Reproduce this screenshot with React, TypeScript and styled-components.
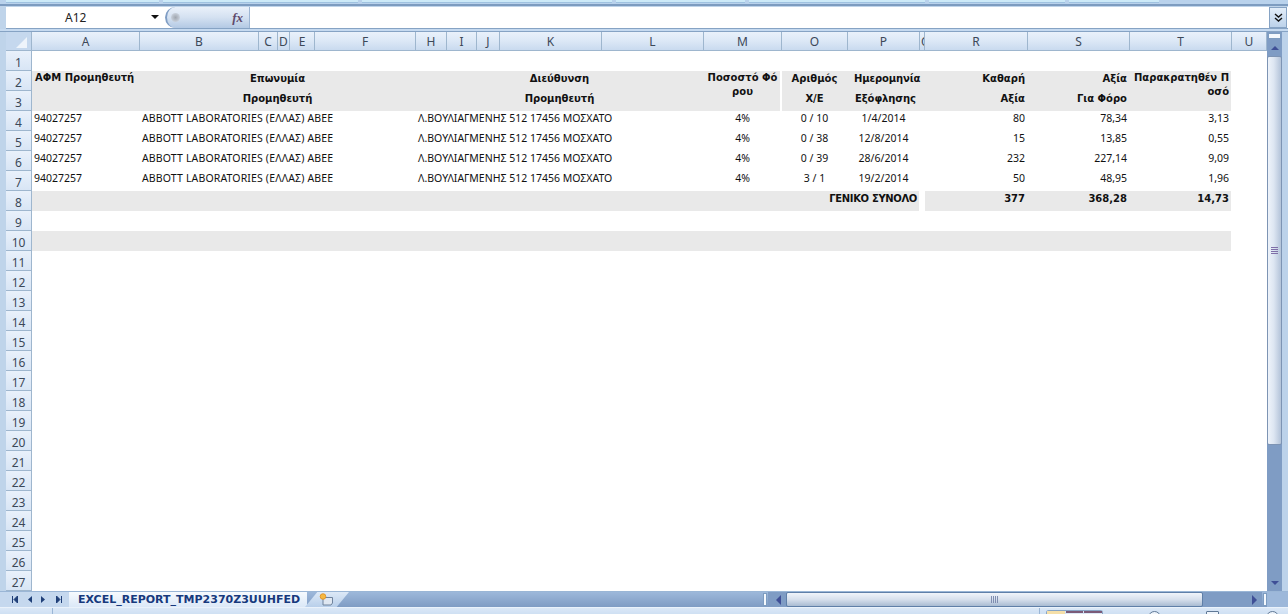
import { Fragment } from "react";
import styled, { createGlobalStyle } from "styled-components";

const GlobalStyle = createGlobalStyle`
  html, body {
    margin: 0;
    padding: 0;
    height: 100%;
    overflow: hidden;
    background: #bfd4ea;
  }
  #root {
    height: 100%;
  }
`;

const COLUMNS = [
  { name: "A", width: 108 },
  { name: "B", width: 119 },
  { name: "C", width: 19 },
  { name: "D", width: 12 },
  { name: "E", width: 25 },
  { name: "F", width: 101 },
  { name: "H", width: 31 },
  { name: "I", width: 30 },
  { name: "J", width: 23 },
  { name: "K", width: 102 },
  { name: "L", width: 102 },
  { name: "M", width: 78 },
  { name: "O", width: 66 },
  { name: "P", width: 72 },
  { name: "Q", width: 5 },
  { name: "R", width: 103 },
  { name: "S", width: 102 },
  { name: "T", width: 102 },
  { name: "U", width: 35 },
];

const ROW_COUNT = 27;

const rows = [
  { afm: "94027257", a: "0 / 10", d: "1/4/2014", r: "80", s: "78,34", t: "3,13" },
  { afm: "94027257", a: "0 / 38", d: "12/8/2014", r: "15", s: "13,85", t: "0,55" },
  { afm: "94027257", a: "0 / 39", d: "28/6/2014", r: "232", s: "227,14", t: "9,09" },
  { afm: "94027257", a: "3 / 1", d: "19/2/2014", r: "50", s: "48,95", t: "1,96" },
];

const Page = styled.div`
  width: 1288px;
  height: 614px;
  display: flex;
  flex-direction: column;
  overflow: hidden;
  background: #bfd4ea;
  font-family: "Noto Sans", "Liberation Sans", sans-serif;
`;

const RibbonEdge = styled.div`
  height: 6px;
  flex: none;
  box-sizing: border-box;
  border-bottom: 2px solid #7d9cc0;
  background: #b9d2ec;
  display: flex;
  gap: 4px;
  padding: 0 6px;
`;

const RibbonGroup = styled.div<{ $w: number }>`
  width: ${(p) => p.$w}px;
  height: 3px;
  background: #cdeaf8;
  border-bottom: 1px solid #9fc2e0;
  box-sizing: border-box;
`;

const FormulaBar = styled.div`
  height: 22px;
  flex: none;
  display: flex;
  box-sizing: border-box;
  margin-top: 1px;
  margin-left: 6px;
  background: #fff;
  border-bottom: 1px solid #86a3c4;
`;

const NameBox = styled.div`
  width: 154px;
  flex: none;
  display: flex;
  align-items: center;
  font-size: 12px;
  color: #222;
  position: relative;
`;

const NameText = styled.span`
  margin-left: 59px;
`;

const NameCaret = styled.span`
  position: absolute;
  right: 1px;
  top: 8px;
  width: 0;
  height: 0;
  border-left: 4px solid transparent;
  border-right: 4px solid transparent;
  border-top: 4px solid #111;
`;

const FxPill = styled.div`
  width: 85px;
  margin-left: 5px;
  flex: none;
  display: flex;
  align-items: center;
  justify-content: space-between;
  padding: 0 6px 0 4px;
  box-sizing: border-box;
  border-radius: 11px 0 0 11px;
  background: linear-gradient(#eaf1fa, #d4e1f1 50%, #b3c9e4);
  border-left: 2px solid #7f9dc4;
  border-right: 1px solid #9db6d4;
`;

const PillDot = styled.span`
  width: 9px;
  height: 9px;
  border-radius: 50%;
  background: radial-gradient(#a0a6af, #d9e2ee);
`;

const FxLabel = styled.span`
  font-family: "Liberation Serif", serif;
  font-style: italic;
  font-weight: 700;
  font-size: 13px;
  color: #5f4a6c;
`;

const FormulaInput = styled.div`
  flex: 1;
`;

const ExpandButton = styled.div`
  width: 18px;
  flex: none;
  margin-right: 1px;
  box-sizing: border-box;
  border: 1px solid #86a3c4;
  background: linear-gradient(#e2edf9, #bcd2ea);
  display: flex;
  align-items: center;
  justify-content: center;
`;

const Gap = styled.div`
  height: 2px;
  flex: none;
  background: #c6daf0;
`;

const SheetArea = styled.div`
  height: 561px;
  flex: none;
  display: flex;
  padding-left: 6px;
  border-bottom: 1px solid #9ab6d6;
  border-top: 1px solid #86a3c4;
  box-sizing: border-box;
`;

const Sheet = styled.div`
  display: grid;
  grid-template-columns: 26px ${COLUMNS.map((c) => c.width + "px").join(" ")};
  grid-template-rows: 19px repeat(${ROW_COUNT}, 20px);
  width: 1261px;
  flex: none;
  background: #fff;
  overflow: hidden;
`;

const Corner = styled.div`
  grid-row: 1;
  grid-column: 1;
  position: relative;
  background: #c5d8ee;
  border-right: 1px solid #9eb6ce;
  border-bottom: 1px solid #9eb6ce;
  box-sizing: border-box;
`;

const CornerMark = styled.span`
  position: absolute;
  right: 4px;
  bottom: 2px;
  width: 0;
  height: 0;
  border-left: 11px solid transparent;
  border-bottom: 11px solid #eef4fb;
`;

const ColHead = styled.div<{ $start?: boolean }>`
  grid-row: 1;
  box-sizing: border-box;
  border-right: 1px solid #9eb6ce;
  border-bottom: 1px solid #9eb6ce;
  background: linear-gradient(#e9f1fb, #dce8f6 50%, #c9daef);
  font-size: 12px;
  color: #3c4858;
  display: flex;
  align-items: center;
  justify-content: ${(p) => (p.$start ? "flex-start" : "center")};
  padding: 1px 0 0 ${(p) => (p.$start ? "1px" : "0")};
  overflow: hidden;
`;

const RowHead = styled.div<{ $row: number }>`
  grid-column: 1;
  grid-row: ${(p) => p.$row + 1};
  box-sizing: border-box;
  border-right: 1px solid #9eb6ce;
  border-bottom: 1px solid #9eb6ce;
  background: linear-gradient(#e9f1fb, #d8e5f5);
  font-size: 12px;
  color: #3c4858;
  display: flex;
  align-items: center;
  justify-content: center;
  padding-top: 3px;
`;

/* first and last are grid column lines for the sheet columns, 2 = A */
const Cell = styled.div<{
  $row: number;
  $first: number;
  $last?: number;
  $rows?: number;
  $align?: string;
  $bold?: boolean;
  $grey?: boolean;
  $nudge?: number;
}>`
  grid-row: ${(p) => p.$row + 1} / span ${(p) => p.$rows ?? 1};
  grid-column: ${(p) => p.$first} / ${(p) => (p.$last ?? p.$first) + 1};
  box-sizing: border-box;
  margin-right: 1px;
  padding: 0 2px 0 ${(p) => 2 + (p.$nudge ?? 0)}px;
  font-size: ${(p) => (p.$bold ? "10px" : "10.5px")};
  font-family: ${(p) => (p.$bold ? '"DejaVu Sans", sans-serif' : "inherit")};
  line-height: ${(p) => (p.$bold ? "14px" : "15px")};
  color: #111;
  text-align: ${(p) => p.$align ?? "left"};
  font-weight: ${(p) => (p.$bold ? 700 : 400)};
  background: ${(p) => (p.$grey ? "#e9e9e9" : "transparent")};
  white-space: pre-wrap;
  overflow: hidden;
`;

const SupplierCell = styled(Cell)`
  letter-spacing: 0.15px;
`;

const DateHeadCell = styled(Cell)`
  overflow: visible;
  letter-spacing: -0.1px;
`;

const TotalCell = styled(Cell)`
  padding-top: 1px;
`;

const TotalLabel = styled(TotalCell)`
  letter-spacing: -0.35px;
`;

const HeadLine = styled.div`
  height: 20px;
  line-height: 15px;
`;

const WhiteRule = styled.div`
  grid-row: 3 / span 2;
  grid-column: 14;
  width: 2px;
  background: #fff;
  margin-left: -2px;
`;

const VScroll = styled.div`
  width: 15px;
  flex: none;
  display: flex;
  flex-direction: column;
  background: #7f9cc4;
  box-sizing: border-box;
`;

const RightFrame = styled.div`
  flex: 1;
  background: #bcd2ea;
`;

const SplitHandle = styled.div`
  height: 4px;
  margin: 1px 1px 0;
  background: #f4f8fd;
  border: 1px solid #7d9cc0;
  flex: none;
`;

const ScrollButton = styled.div`
  height: 17px;
  flex: none;
  display: flex;
  align-items: center;
  justify-content: center;
`;

const Triangle = styled.span<{ $dir: "up" | "down" }>`
  width: 0;
  height: 0;
  border-left: 4px solid transparent;
  border-right: 4px solid transparent;
  ${(p) =>
    p.$dir === "up"
      ? "border-bottom: 4px solid #3f4f96;"
      : "border-top: 4px solid #3f4f96;"}
`;

const VThumb = styled.div`
  height: 389px;
  flex: none;
  box-sizing: border-box;
  border: 1px solid #7d94b4;
  border-radius: 2px;
  background: linear-gradient(90deg, #eef3fa, #dde6f2 45%, #b3c3d9);
  display: flex;
  align-items: center;
  justify-content: center;
`;

const Grip = styled.div<{ $vertical?: boolean }>`
  width: 7px;
  height: 7px;
  background: ${(p) =>
    p.$vertical
      ? "repeating-linear-gradient(90deg, #7f8db0 0 1px, transparent 1px 2px)"
      : "repeating-linear-gradient(0deg, #7f6fa8 0 1px, transparent 1px 2px)"};
`;

const VTrack = styled.div`
  flex: 1;
`;

const TabBar = styled.div`
  height: 15px;
  flex: none;
  display: flex;
  align-items: stretch;
  background: linear-gradient(#9db8da, #7f9cc4);
  box-sizing: border-box;
`;

const TabNav = styled.div`
  width: 69px;
  padding-left: 12px;
  flex: none;
  background: #c5d8ee;
  display: flex;
  align-items: center;
  box-sizing: border-box;
`;

const ActiveTab = styled.div`
  width: 238px;
  flex: none;
  background: linear-gradient(#f6fafe, #dbe8f7);
  color: #17397d;
  font-family: "DejaVu Sans", sans-serif;
  font-size: 11px;
  font-weight: 700;
  display: flex;
  align-items: center;
  padding-left: 9px;
  box-sizing: border-box;
  white-space: nowrap;
`;

const NewTab = styled.div`
  width: 44px;
  flex: none;
  display: flex;
  align-items: center;
  justify-content: center;
  background: linear-gradient(#dde9f7, #b8cfea);
  clip-path: polygon(28% 0, 100% 0, 72% 100%, 0 100%);
  margin-left: -2px;
`;

const TabFill = styled.div`
  flex: 1;
`;

const HSplit = styled.div`
  width: 2px;
  flex: none;
  background: #f4f8fd;
  border: 1px solid #7d9cc0;
  margin: 1px 0;
`;

const HScroll = styled.div`
  width: 494px;
  flex: none;
  display: flex;
  align-items: center;
  margin: 0 1px;
  background: #7f9cc4;
`;

const HArrow = styled.span<{ $dir: "left" | "right" }>`
  width: 0;
  height: 0;
  border-top: 5px solid transparent;
  border-bottom: 5px solid transparent;
  ${(p) =>
    p.$dir === "left"
      ? "border-right: 5px solid #3f4f96; margin: 0 5px 0 8px;"
      : "border-left: 5px solid #3f4f96; margin: 0 5px 0 auto;"}
`;

const HThumb = styled.div`
  width: 417px;
  height: 15px;
  box-sizing: border-box;
  border: 1px solid #5f7fa8;
  border-radius: 2px;
  background: linear-gradient(#f0f4fa, #d6dfec 50%, #a9bbd2);
  display: flex;
  align-items: center;
  justify-content: center;
`;

const TabBarEnd = styled.div`
  width: 21px;
  flex: none;
  background: #9db8da;
`;

const StatusBar = styled.div`
  flex: 1;
  display: flex;
  background: linear-gradient(#dbe8f7, #cfe0f3);
  border-top: 1px solid #eaf2fb;
  box-sizing: border-box;
  overflow: hidden;
`;

const StatusCell = styled.div<{ $w: number }>`
  width: ${(p) => p.$w}px;
  flex: none;
  border-right: 1px solid #9ab6d6;
  box-sizing: border-box;
`;

const ViewButtons = styled.div`
  width: 57px;
  margin: 2px 0 0 6px;
  flex: none;
  display: flex;
  gap: 1px;
  border: 1px solid #86a3c4;
  border-bottom: none;
  border-radius: 3px 3px 0 0;
  box-sizing: border-box;
`;

const ViewButton = styled.div<{ $active?: boolean }>`
  flex: 1;
  background: ${(p) => (p.$active ? "#f5dfa8" : "#dce8f6")};
  border-top: 2px solid ${(p) => (p.$active ? "#f5dfa8" : "#7a5a78")};
`;

const ZoomKnob = styled.div<{ $gap: number; $square?: boolean }>`
  width: 13px;
  height: 13px;
  margin: 3px 0 0 ${(p) => p.$gap}px;
  flex: none;
  box-sizing: border-box;
  border: 1px solid #5f7896;
  border-radius: ${(p) => (p.$square ? "1px" : "50%")};
  background: #eef4fb;
`;

const NavIcon = () => (
  <svg width="50" height="9" viewBox="0 0 50 9">
    <path d="M0.5 1v7M5.5 1 2 4.5 5.5 8z" fill="#1f3f78" stroke="#1f3f78" strokeWidth="1" />
    <path d="M20 1 16 4.5 20 8z" fill="#1f3f78" />
    <path d="M29 1l4 3.5L29 8z" fill="#1f3f78" />
    <path d="M44.5 1l3.5 3.5L44.5 8zM49.5 1v7" fill="#1f3f78" stroke="#1f3f78" strokeWidth="1" />
  </svg>
);

const NewSheetIcon = () => (
  <svg width="16" height="13" viewBox="0 0 16 13">
    <path d="M4 4.5h9.5V10l-1.5 2H4z" fill="#dfe7f1" stroke="#6f839d" />
    <circle cx="4" cy="3.5" r="2.8" fill="#f5b942" stroke="#e08a1c" strokeWidth="0.8" />
  </svg>
);

const ExpandIcon = () => (
  <svg width="9" height="10" viewBox="0 0 9 10">
    <path d="M1 1l3.5 3L8 1M1 5l3.5 3L8 5" fill="none" stroke="#111" strokeWidth="1.4" />
  </svg>
);

export default function App() {
  return (
    <Page>
      <GlobalStyle />
      <RibbonEdge>
        <RibbonGroup $w={153} />
        <RibbonGroup $w={195} />
        <RibbonGroup $w={250} />
        <RibbonGroup $w={129} />
        <RibbonGroup $w={176} />
        <RibbonGroup $w={136} />
        <RibbonGroup $w={90} />
      </RibbonEdge>
      <FormulaBar>
        <NameBox>
          <NameText>A12</NameText>
          <NameCaret />
        </NameBox>
        <FxPill>
          <PillDot />
          <FxLabel>fx</FxLabel>
        </FxPill>
        <FormulaInput />
        <ExpandButton>
          <ExpandIcon />
        </ExpandButton>
      </FormulaBar>
      <Gap />
      <SheetArea>
        <Sheet>
          <Corner>
            <CornerMark />
          </Corner>
          {COLUMNS.map((c) => (
            <ColHead key={c.name} $start={c.name === "Q"}>
              {c.name}
            </ColHead>
          ))}
          {Array.from({ length: ROW_COUNT }, (_, i) => (
            <RowHead key={i} $row={i + 1}>
              {i + 1}
            </RowHead>
          ))}

          <Cell $row={2} $rows={2} $first={2} $last={19} $grey />
          <Cell $row={2} $rows={2} $first={2} $bold $nudge={1}>
            ΑΦΜ Προμηθευτή
          </Cell>
          <Cell $row={2} $rows={2} $first={3} $last={7} $align="center" $bold>
            <HeadLine>Επωνυμία</HeadLine>
            <HeadLine>Προμηθευτή</HeadLine>
          </Cell>
          <Cell $row={2} $rows={2} $first={8} $last={12} $align="center" $bold>
            <HeadLine>Διεύθυνση</HeadLine>
            <HeadLine>Προμηθευτή</HeadLine>
          </Cell>
          <Cell $row={2} $rows={2} $first={13} $align="center" $bold>
            Ποσοστό Φό{"\n"}ρου
          </Cell>
          <WhiteRule />
          <Cell $row={2} $rows={2} $first={14} $align="center" $bold>
            <HeadLine>Αριθμός</HeadLine>
            <HeadLine>Χ/Ε</HeadLine>
          </Cell>
          <DateHeadCell $row={2} $rows={2} $first={15} $align="center" $bold $nudge={4}>
            <HeadLine>Ημερομηνία</HeadLine>
            <HeadLine>Εξόφλησης</HeadLine>
          </DateHeadCell>
          <Cell $row={2} $rows={2} $first={17} $align="right" $bold>
            <HeadLine>Καθαρή</HeadLine>
            <HeadLine>Αξία</HeadLine>
          </Cell>
          <Cell $row={2} $rows={2} $first={18} $align="right" $bold>
            <HeadLine>Αξία</HeadLine>
            <HeadLine>Για Φόρο</HeadLine>
          </Cell>
          <Cell $row={2} $rows={2} $first={19} $align="right" $bold>
            Παρακρατηθέν Π{"\n"}οσό
          </Cell>

          {rows.map((r, i) => (
            <Fragment key={i}>
              <Cell $row={4 + i} $first={2}>
                {r.afm}
              </Cell>
              <SupplierCell $row={4 + i} $first={3} $last={7}>
                ABBOTT LABORATORIES (ΕΛΛΑΣ) ΑΒΕΕ
              </SupplierCell>
              <Cell $row={4 + i} $first={8} $last={12}>
                Λ.ΒΟΥΛΙΑΓΜΕΝΗΣ 512 17456 ΜΟΣΧΑΤΟ
              </Cell>
              <Cell $row={4 + i} $first={13} $align="center">
                4%
              </Cell>
              <Cell $row={4 + i} $first={14} $align="center">
                {r.a}
              </Cell>
              <Cell $row={4 + i} $first={15} $align="center">
                {r.d}
              </Cell>
              <Cell $row={4 + i} $first={17} $align="right">
                {r.r}
              </Cell>
              <Cell $row={4 + i} $first={18} $align="right">
                {r.s}
              </Cell>
              <Cell $row={4 + i} $first={19} $align="right">
                {r.t}
              </Cell>
            </Fragment>
          ))}

          <TotalLabel $row={8} $first={2} $last={15} $align="right" $bold $grey>
            ΓΕΝΙΚΟ ΣΥΝΟΛΟ
          </TotalLabel>
          <Cell $row={8} $first={17} $last={19} $grey />
          <TotalCell $row={8} $first={17} $align="right" $bold>
            377
          </TotalCell>
          <TotalCell $row={8} $first={18} $align="right" $bold>
            368,28
          </TotalCell>
          <TotalCell $row={8} $first={19} $align="right" $bold>
            14,73
          </TotalCell>
          <Cell $row={10} $first={2} $last={19} $grey />
        </Sheet>
        <VScroll>
          <SplitHandle />
          <ScrollButton>
            <Triangle $dir="up" />
          </ScrollButton>
          <VThumb>
            <Grip />
          </VThumb>
          <VTrack />
          <ScrollButton>
            <Triangle $dir="down" />
          </ScrollButton>
        </VScroll>
        <RightFrame />
      </SheetArea>
      <TabBar>
        <TabNav>
          <NavIcon />
        </TabNav>
        <ActiveTab>EXCEL_REPORT_TMP2370Z3UUHFED</ActiveTab>
        <NewTab>
          <NewSheetIcon />
        </NewTab>
        <TabFill />
        <HSplit />
        <HScroll>
          <HArrow $dir="left" />
          <HThumb>
            <Grip $vertical />
          </HThumb>
          <HArrow $dir="right" />
        </HScroll>
        <HSplit />
        <TabBarEnd />
      </TabBar>
      <StatusBar>
        <StatusCell $w={53} />
        <StatusCell $w={987} />
        <ViewButtons>
          <ViewButton $active />
          <ViewButton />
          <ViewButton />
        </ViewButtons>
        <ZoomKnob $gap={45} />
        <ZoomKnob $gap={45} $square />
        <ZoomKnob $gap={47} />
      </StatusBar>
    </Page>
  );
}
